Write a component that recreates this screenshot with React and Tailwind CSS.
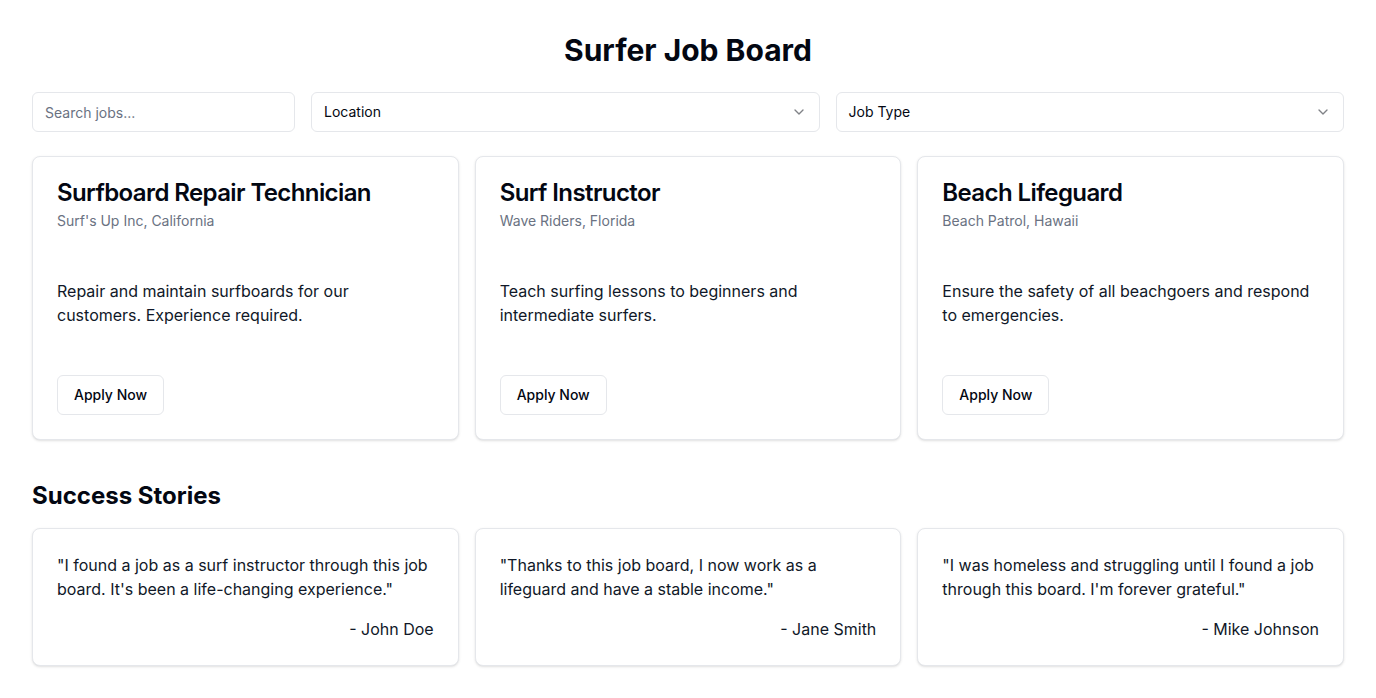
import { ChevronDown } from "lucide-react";

const jobs = [
  {
    title: "Surfboard Repair Technician",
    company: "Surf's Up Inc, California",
    description: "Repair and maintain surfboards for our customers. Experience required."
  },
  {
    title: "Surf Instructor",
    company: "Wave Riders, Florida",
    description: "Teach surfing lessons to beginners and intermediate surfers."
  },
  {
    title: "Beach Lifeguard",
    company: "Beach Patrol, Hawaii",
    description: "Ensure the safety of all beachgoers and respond to emergencies."
  }
];

const stories = [
  {
    quote: "\"I found a job as a surf instructor through this job board. It's been a life-changing experience.\"",
    author: "- John Doe"
  },
  {
    quote: "\"Thanks to this job board, I now work as a lifeguard and have a stable income.\"",
    author: "- Jane Smith"
  },
  {
    quote: "\"I was homeless and struggling until I found a job through this board. I'm forever grateful.\"",
    author: "- Mike Johnson"
  }
];

function SelectBox({ label }) {
  return (
    <button
      type="button"
      className="flex h-10 flex-1 items-center justify-between rounded-md border border-gray-200 bg-white px-3 text-sm text-gray-950"
    >
      <span>{label}</span>
      <ChevronDown className="h-4 w-4 opacity-50" />
    </button>
  );
}

function JobCard({ job }) {
  return (
    <div className="rounded-lg border border-gray-200 bg-white shadow-sm">
      <div className="flex flex-col space-y-1.5 p-6">
        <h3 className="text-2xl font-semibold leading-none tracking-tight text-gray-950">{job.title}</h3>
        <p className="text-sm text-gray-500">{job.company}</p>
      </div>
      <div className="p-6 text-base text-gray-900">
        <p>{job.description}</p>
      </div>
      <div className="flex items-center p-6">
        <button
          type="button"
          className="h-10 rounded-md border border-gray-200 bg-white px-4 text-sm font-medium text-gray-950"
        >
          Apply Now
        </button>
      </div>
    </div>
  );
}

function StoryCard({ story }) {
  return (
    <div className="rounded-lg border border-gray-200 bg-white p-6 shadow-sm">
      <p className="text-base text-gray-900">{story.quote}</p>
      <p className="mt-4 text-right text-base text-gray-900">{story.author}</p>
    </div>
  );
}

export default function App() {
  return (
    <div className="min-h-screen bg-white px-8 pt-8 pb-8 text-gray-950" style={{ fontFamily: "Inter, 'Noto Sans', sans-serif" }}>
      <h1 className="mb-6 text-center text-3xl font-bold">Surfer Job Board</h1>

      <div className="mb-6 flex gap-4">
        <input
          type="text"
          placeholder="Search jobs..."
          className="h-10 w-[263px] rounded-md border border-gray-200 px-3 text-sm placeholder:text-gray-500 focus:outline-none"
        />
        <SelectBox label="Location" />
        <SelectBox label="Job Type" />
      </div>

      <div className="grid grid-cols-3 gap-4">
        {jobs.map((job) => (
          <JobCard key={job.title} job={job} />
        ))}
      </div>

      <h2 className="mt-10 mb-4 text-2xl font-bold">Success Stories</h2>
      <div className="grid grid-cols-3 gap-4">
        {stories.map((story) => (
          <StoryCard key={story.author} story={story} />
        ))}
      </div>
    </div>
  );
}
